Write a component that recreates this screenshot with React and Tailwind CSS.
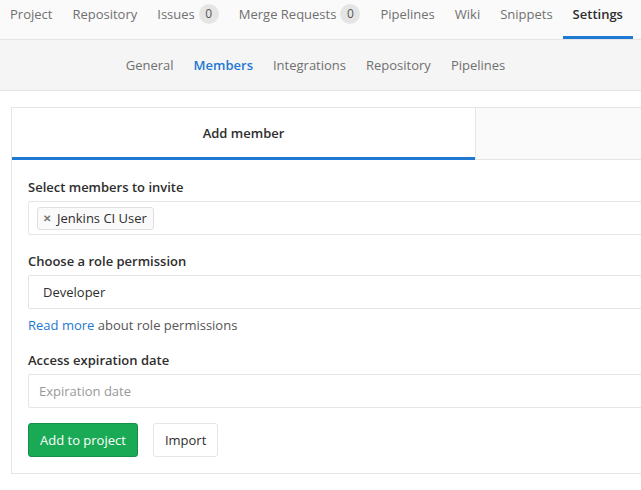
const topNav = [
  { label: "Project" },
  { label: "Repository" },
  { label: "Issues", count: 0 },
  { label: "Merge Requests", count: 0 },
  { label: "Pipelines" },
  { label: "Wiki" },
  { label: "Snippets" },
  { label: "Settings", active: true },
];

const subNav = ["General", "Members", "Integrations", "Repository", "Pipelines"];

const App = () => {
  return (
    <div
      className="w-[641px] h-[490px] overflow-hidden bg-white text-[13px] leading-[20px] text-[#2e2e2e]"
      style={{ fontFamily: '"Open Sans", "Noto Sans", sans-serif' }}
    >
      <div className="h-[40px] bg-[#fafafa] border-b border-[#e5e5e5] flex whitespace-nowrap">
        {topNav.map((item) => (
          <div
            key={item.label}
            className={`h-full flex items-center px-[10px] border-b-[3px] ${
              item.active
                ? "border-[#1f78d1] text-[#2e2e2e] font-semibold"
                : "border-transparent text-[#707070]"
            }`}
          >
            <span className="-mt-[8px]">{item.label}</span>
            {item.count !== undefined && (
              <span className="-mt-[8px] ml-[4px] inline-flex items-center justify-center w-[20px] h-[20px] rounded-full bg-[#e5e5e5] text-[#555] text-[12px]">
                {item.count}
              </span>
            )}
          </div>
        ))}
      </div>

      <div className="h-[51px] bg-[#f5f5f5] border-b border-[#e5e5e5] flex justify-center items-center gap-[20px] pr-[10px]">
        {subNav.map((s) => (
          <span
            key={s}
            className={s === "Members" ? "text-[#1f78d1] font-semibold" : "text-[#707070]"}
          >
            {s}
          </span>
        ))}
      </div>

      <div className="pt-[16px] pl-[11px]">
        <div className="w-[926px] border border-[#e5e5e5]">
          <div className="flex h-[52px] border-b border-[#e5e5e5]">
            <div className="w-[463px] flex items-center justify-center font-semibold border-b-[3px] border-[#1f78d1] -mb-px">
              Add member
            </div>
            <div className="flex-1 bg-[#fafafa] border-l border-[#e5e5e5]"></div>
          </div>

          <div className="px-[16px] pt-[17px] pb-[16px]">
            <div className="font-semibold mb-[4px]">Select members to invite</div>
            <div className="h-[34px] border border-[#e5e5e5] rounded-[2px] flex items-center px-[8px]">
              <span className="h-[23px] flex items-center gap-[6px] pl-[5px] pr-[6px] border border-[#e0e0e0] rounded-[3px] bg-[#fafafa]">
                <span className="text-[#777] text-[10px] font-bold">✕</span>
                <span>Jenkins CI User</span>
              </span>
            </div>

            <div className="font-semibold mt-[16px] mb-[4px]">Choose a role permission</div>
            <div className="h-[34px] border border-[#e5e5e5] rounded-[2px] flex items-center pl-[14px]">
              Developer
            </div>
            <div className="mt-[6px] text-[#555]">
              <span className="text-[#1f78d1]">Read more</span> about role permissions
            </div>

            <div className="font-semibold mt-[15px] mb-[4px]">Access expiration date</div>
            <div className="h-[34px] border border-[#e5e5e5] rounded-[2px] flex items-center pl-[10px] text-[#999]">
              Expiration date
            </div>

            <div className="flex gap-[15px] mt-[15px]">
              <button className="h-[34px] px-[11px] bg-[#1aaa55] border border-[#168f48] text-white rounded-[3px]">
                Add to project
              </button>
              <button className="h-[34px] px-[11px] bg-white border border-[#e5e5e5] text-[#2e2e2e] rounded-[3px]">
                Import
              </button>
            </div>
          </div>
        </div>
      </div>
    </div>
  );
};

export default App;
